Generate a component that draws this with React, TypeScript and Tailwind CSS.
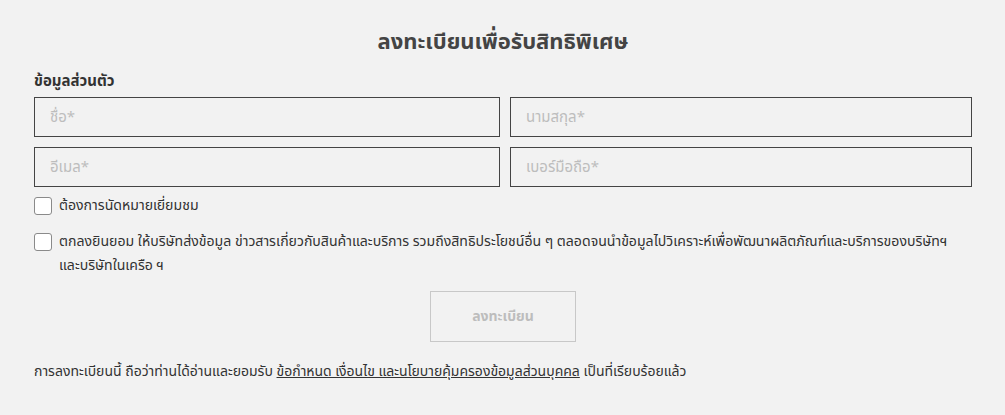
import { useState } from "react";

const font = {
  fontFamily: '"Noto Sans Thai", "Noto Sans", "DejaVu Sans", sans-serif',
};

function Field({ placeholder }: { placeholder: string }) {
  return (
    <input
      placeholder={placeholder}
      className="h-10 w-full border border-[#444] bg-[#f2f2f2] px-[15px] text-[15px] text-[#333] outline-none placeholder:text-[#bdbdbd]"
    />
  );
}

function Check({ checked, onChange, children }: { checked: boolean; onChange: () => void; children: React.ReactNode }) {
  return (
    <label className="flex cursor-pointer items-start gap-[7px] text-[14.1px] leading-6 text-[#333]">
      <span
        onClick={onChange}
        className={`mt-[3px] h-[18px] w-[18px] shrink-0 rounded-[3px] border border-[#8a8a8a] ${checked ? "bg-[#444]" : "bg-white"}`}
      />
      <span>{children}</span>
    </label>
  );
}

export default function App() {
  const [visit, setVisit] = useState(false);
  const [consent, setConsent] = useState(false);

  return (
    <div className="min-h-[415px] w-full bg-[#f2f2f2] px-[34px] pt-[27px]" style={font}>
      <div className="w-[938px]">
        <h1 className="text-center text-[22px] font-bold leading-8 text-[#444]">ลงทะเบียนเพื่อรับสิทธิพิเศษ</h1>

        <p className="mt-[13px] text-[15px] font-bold leading-5 text-[#333]">ข้อมูลส่วนตัว</p>

        <div className="mt-[5px] grid grid-cols-[466px_462px] gap-x-[10px] gap-y-[10px]">
          <Field placeholder="ชื่อ*" />
          <Field placeholder="นามสกุล*" />
          <Field placeholder="อีเมล*" />
          <Field placeholder="เบอร์มือถือ*" />
        </div>

        <div className="mt-[7px] flex flex-col gap-3">
          <Check checked={visit} onChange={() => setVisit(!visit)}>
            ต้องการนัดหมายเยี่ยมชม
          </Check>
          <Check checked={consent} onChange={() => setConsent(!consent)}>
            <span className="whitespace-nowrap">
              ตกลงยินยอม ให้บริษัทส่งข้อมูล ข่าวสารเกี่ยวกับสินค้าและบริการ รวมถึงสิทธิประโยชน์อื่น ๆ ตลอดจนนำข้อมูลไปวิเคราะห์เพื่อพัฒนาผลิตภัณฑ์และบริการของบริษัทฯ
            </span>
            <br />
            และบริษัทในเครือ ฯ
          </Check>
        </div>

        <div className="mt-[13px] flex justify-center">
          <button className="h-[51px] w-[146px] border border-[#c8c8c8] text-[14px] font-bold text-[#bdbdbd]">ลงทะเบียน</button>
        </div>

        <p className="mt-5 text-[14px] leading-5 text-[#333]">
          การลงทะเบียนนี้ ถือว่าท่านได้อ่านและยอมรับ{" "}
          <a className="underline">ข้อกำหนด เงื่อนไข และนโยบายคุ้มครองข้อมูลส่วนบุคคล</a> เป็นที่เรียบร้อยแล้ว
        </p>
      </div>
    </div>
  );
}
